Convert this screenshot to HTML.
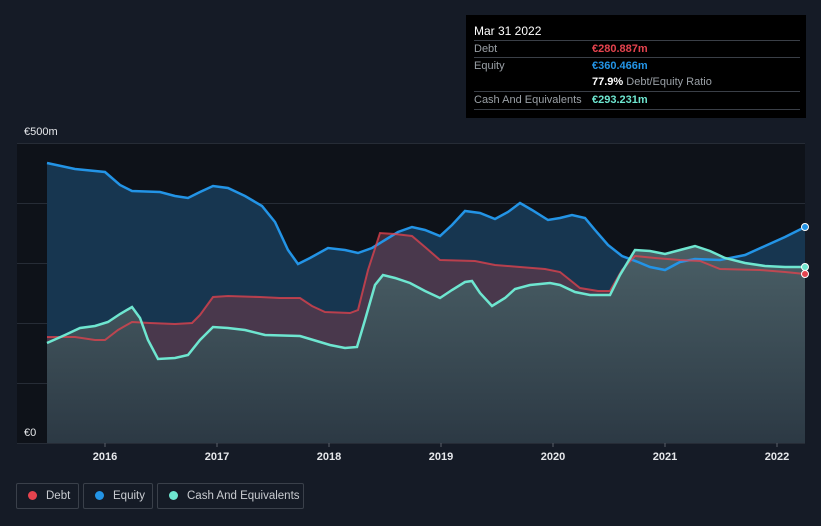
<!DOCTYPE html>
<html><head><meta charset="utf-8"><style>
html,body{margin:0;overflow:hidden}
body{background:#151b26;width:821px;height:526px;font-family:"Liberation Sans",sans-serif;position:relative}
.tt{position:absolute;left:466px;top:15px;width:340px;height:103px;background:#000;color:#fff;font-size:11px}
.row{position:absolute;left:8px;width:326px;height:17px;line-height:17px;border-top:1px solid #3a3f47;color:#9aa0a6}
.row span{position:absolute;left:118px}
.lg{position:absolute;top:483px;height:26px;border:1px solid #3a404a;border-radius:2px;color:#c9ccd1;font-size:11.5px;line-height:24px;box-sizing:border-box;white-space:nowrap}
.dot{display:inline-block;width:9px;height:9px;border-radius:50%;margin:0 9px 0 11px;vertical-align:-1px}
</style></head><body>
<svg width="821" height="526" style="position:absolute;left:0;top:0">
<defs><linearGradient id="g" x1="0" y1="0" x2="0" y2="1"><stop offset="0" stop-color="#4a5f66"/><stop offset="1" stop-color="#2c3944"/></linearGradient></defs>
<rect x="17" y="143" width="788" height="300" fill="#0e1219"/>
<g stroke="#262c36" stroke-width="1">
<line x1="17" y1="143.5" x2="805" y2="143.5"/><line x1="17" y1="203.5" x2="805" y2="203.5"/><line x1="17" y1="263.5" x2="805" y2="263.5"/><line x1="17" y1="323.5" x2="805" y2="323.5"/><line x1="17" y1="383.5" x2="805" y2="383.5"/><line x1="17" y1="443.5" x2="805" y2="443.5"/>
</g>
<polygon fill="#173650" points="47,443 47,163 75,169 105,172 120,185 132,191 160,192 175,196 188,198 200,192 213,186 228,188 245,196 262,206 275,222 288,250 298,264 310,258 328,248 345,250 358,253 372,248 385,240 398,232 412,227 425,230 440,236 452,225 465,211 480,213 495,219 508,212 520,203 532,210 548,220 560,218 572,215 585,218 595,230 608,245 622,256 638,262 650,267 665,270 680,262 695,259 720,260 745,255 765,246 785,237 805,227 805,443"/>
<polygon fill="#6a3a4a" opacity="0.6" points="47,443 47,337 75,337 95,340 105,340 118,330 132,322 150,323 175,324 192,323 200,315 213,297 228,296 260,297 280,298 300,298 312,306 325,312 350,313 358,310 368,270 380,233 395,234 412,236 425,247 440,260 475,261 495,265 520,267 545,269 560,272 570,280 580,288 598,291 610,291 622,270 635,256 655,258 680,260 700,261 720,269 760,270 785,272 805,274 805,443"/>
<polygon fill="url(#g)" points="47,443 47,343 65,335 80,328 95,326 108,322 120,314 132,307 140,318 148,340 158,359 175,358 188,355 200,340 213,327 228,328 245,330 265,335 300,336 310,339 330,345 345,348 357,347 365,320 375,285 383,275 395,278 410,283 425,291 440,298 452,290 465,282 472,281 480,293 492,306 505,298 515,289 530,285 550,283 560,285 575,292 590,295 610,295 620,275 635,250 650,251 665,254 680,250 695,246 710,251 725,258 745,263 765,266 785,267 805,267 805,443"/>
<polyline fill="none" stroke="#2394e6" stroke-width="2.5" points="47,163 75,169 105,172 120,185 132,191 160,192 175,196 188,198 200,192 213,186 228,188 245,196 262,206 275,222 288,250 298,264 310,258 328,248 345,250 358,253 372,248 385,240 398,232 412,227 425,230 440,236 452,225 465,211 480,213 495,219 508,212 520,203 532,210 548,220 560,218 572,215 585,218 595,230 608,245 622,256 638,262 650,267 665,270 680,262 695,259 720,260 745,255 765,246 785,237 805,227"/>
<polyline fill="none" stroke="#e5434e" stroke-width="2" opacity="0.75" points="47,337 75,337 95,340 105,340 118,330 132,322 150,323 175,324 192,323 200,315 213,297 228,296 260,297 280,298 300,298 312,306 325,312 350,313 358,310 368,270 380,233 395,234 412,236 425,247 440,260 475,261 495,265 520,267 545,269 560,272 570,280 580,288 598,291 610,291 622,270 635,256 655,258 680,260 700,261 720,269 760,270 785,272 805,274"/>
<polyline fill="none" stroke="#6ee6d0" stroke-width="2.5" points="47,343 65,335 80,328 95,326 108,322 120,314 132,307 140,318 148,340 158,359 175,358 188,355 200,340 213,327 228,328 245,330 265,335 300,336 310,339 330,345 345,348 357,347 365,320 375,285 383,275 395,278 410,283 425,291 440,298 452,290 465,282 472,281 480,293 492,306 505,298 515,289 530,285 550,283 560,285 575,292 590,295 610,295 620,275 635,250 650,251 665,254 680,250 695,246 710,251 725,258 745,263 765,266 785,267 805,267"/>
<circle cx="805" cy="227" r="3.5" fill="#2394e6" stroke="#fff" stroke-width="1"/>
<circle cx="805" cy="274" r="3.5" fill="#e5434e" stroke="#fff" stroke-width="1"/>
<circle cx="805" cy="267" r="3.5" fill="#6ee6d0" stroke="#fff" stroke-width="1"/>
<g stroke="#5a606a"><line x1="105" y1="443" x2="105" y2="447"/><line x1="217" y1="443" x2="217" y2="447"/><line x1="329" y1="443" x2="329" y2="447"/><line x1="441" y1="443" x2="441" y2="447"/><line x1="553" y1="443" x2="553" y2="447"/><line x1="665" y1="443" x2="665" y2="447"/><line x1="777" y1="443" x2="777" y2="447"/></g>
<g fill="#e6e8eb" font-size="11" font-weight="bold" text-anchor="middle" font-family="Liberation Sans,sans-serif">
<text x="105" y="460">2016</text><text x="217" y="460">2017</text><text x="329" y="460">2018</text><text x="441" y="460">2019</text><text x="553" y="460">2020</text><text x="665" y="460">2021</text><text x="777" y="460">2022</text></g>
<g fill="#e6e8eb" font-size="11" font-family="Liberation Sans,sans-serif"><text x="24" y="135">€500m</text><text x="24" y="436">€0</text></g>
</svg>
<div class="tt">
<div style="position:absolute;left:8px;top:9px;font-size:12px">Mar 31 2022</div>
<div class="row" style="top:25px">Debt<span style="color:#e5434e;font-weight:bold">€280.887m</span></div>
<div class="row" style="top:42px">Equity<span style="color:#2394e6;font-weight:bold">€360.466m</span></div>
<div class="row" style="top:59px;border-top:none"><span style="color:#9aa0a6"><b style="color:#fff">77.9%</b> Debt/Equity Ratio</span></div>
<div class="row" style="top:76px">Cash And Equivalents<span style="color:#6ee6d0;font-weight:bold">€293.231m</span></div>
<div class="row" style="top:94px;height:0"></div>
</div>
<div class="lg" style="left:16px;width:63px"><span class="dot" style="background:#e5434e"></span>Debt</div>
<div class="lg" style="left:83px;width:70px"><span class="dot" style="background:#2394e6"></span>Equity</div>
<div class="lg" style="left:157px;width:147px"><span class="dot" style="background:#6ee6d0"></span>Cash And Equivalents</div>
</body></html>
